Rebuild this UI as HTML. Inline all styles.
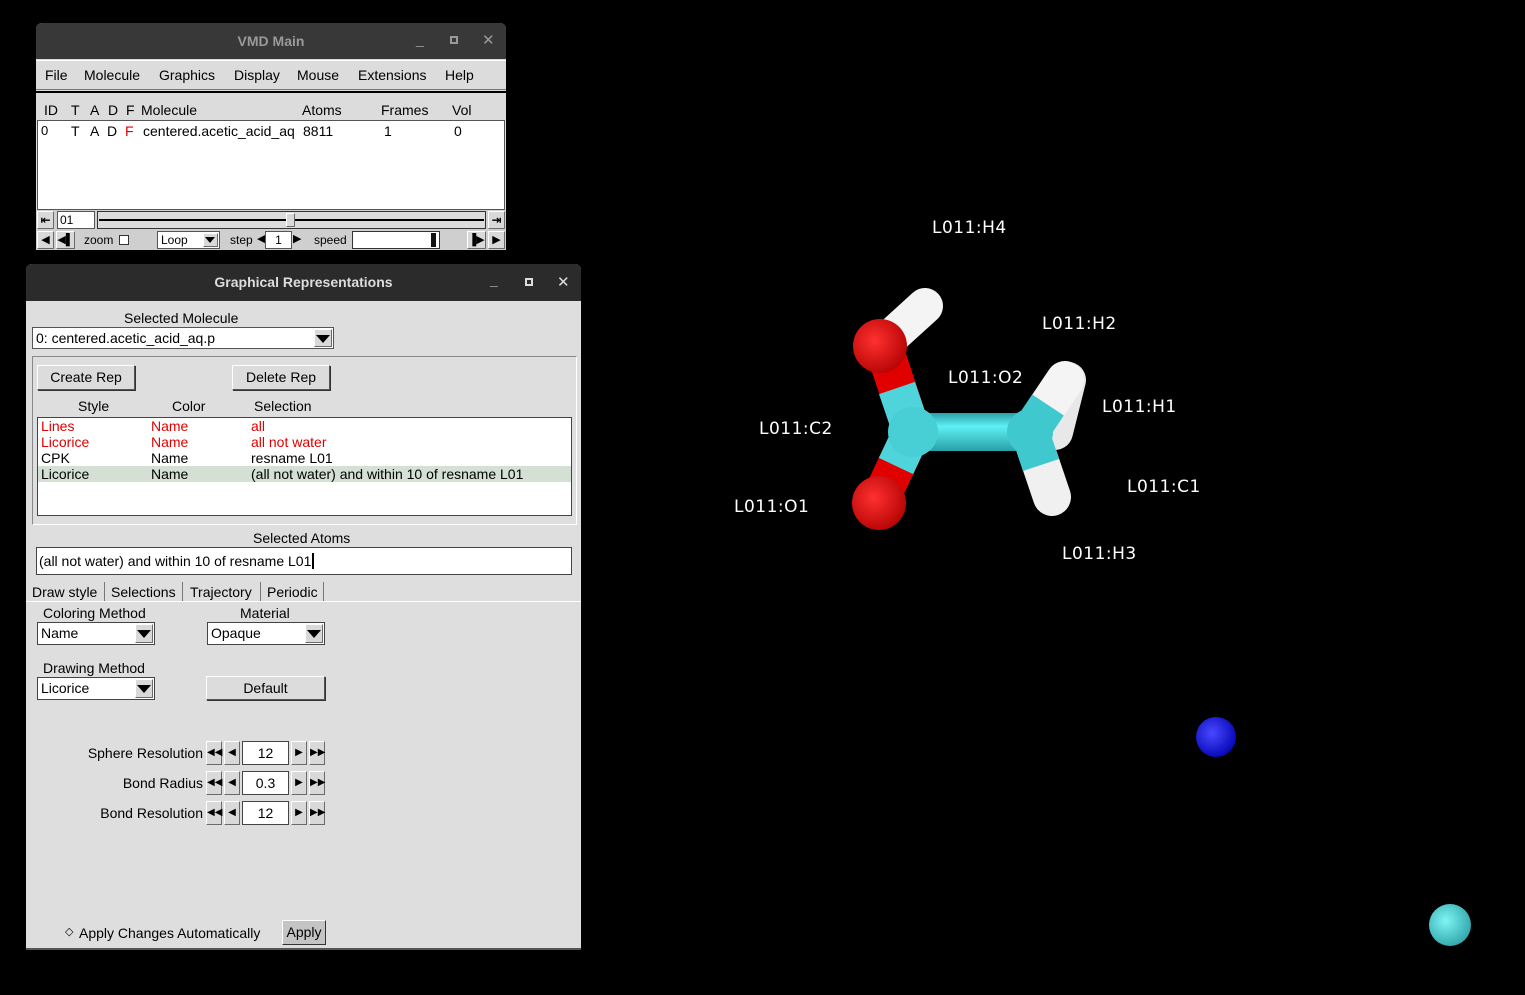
<!DOCTYPE html>
<html><head><meta charset="utf-8"><style>
*{box-sizing:border-box;margin:0;padding:0}
body{width:1525px;height:995px;background:#000;position:relative;overflow:hidden;font-family:"Liberation Sans","DejaVu Sans",sans-serif;font-size:14px;color:#000}
.a{position:absolute;white-space:nowrap}
.g{background:#dcdcdc}
.w{background:#fff}
.rais{border:1px solid;border-color:#fff #6a6a6a #6a6a6a #fff;background:#d9d9d9}
.btn{border:1px solid;border-color:#fff #555 #555 #fff;background:#dcdcdc;text-align:center;box-shadow:1px 1px 0 #333}
.arr{width:0;height:0;border-left:7px solid transparent;border-right:7px solid transparent;border-top:8px solid #000;position:absolute}
.red{color:#e00000}
.lbl{position:absolute;color:#fff;font-size:17px;letter-spacing:0.5px;font-family:"DejaVu Sans","Liberation Sans",sans-serif;white-space:nowrap}
</style></head><body>

<!-- VMD Main -->
<div class="a" style="left:36px;top:23px;width:470px;height:227px;background:#dcdcdc;border-radius:6px 6px 0 0;overflow:hidden">
  <div class="a" style="left:0;top:0;width:470px;height:36px;background:#383838"></div>
  <div class="a" style="left:0;top:10px;width:470px;text-align:center;color:#9a9a9a;font-weight:bold;font-size:14px">VMD Main</div>
  <div class="a" style="left:380px;top:8px;color:#999;font-size:14px">_</div>
  <div class="a" style="left:414px;top:13px;width:8px;height:8px;border:2px solid #999"></div>
  <div class="a" style="left:446px;top:8px;color:#999;font-size:15px;font-weight:bold">✕</div>
  <div class="a" style="left:0;top:37px;width:470px;height:30px;border-top:1px solid #fff;border-bottom:1px solid #777"></div>
  <div class="a" style="left:9px;top:44px;font-size:14px">File</div>
  <div class="a" style="left:48px;top:44px">Molecule</div>
  <div class="a" style="left:123px;top:44px">Graphics</div>
  <div class="a" style="left:198px;top:44px">Display</div>
  <div class="a" style="left:261px;top:44px">Mouse</div>
  <div class="a" style="left:322px;top:44px">Extensions</div>
  <div class="a" style="left:409px;top:44px">Help</div>
  <div class="a" style="left:0;top:68px;width:470px;height:2px;background:#000"></div>
  <div class="a" style="left:8px;top:79px">ID</div>
  <div class="a" style="left:35px;top:79px">T</div><div class="a" style="left:54px;top:79px">A</div><div class="a" style="left:72px;top:79px">D</div><div class="a" style="left:90px;top:79px">F</div>
  <div class="a" style="left:105px;top:79px">Molecule</div>
  <div class="a" style="left:266px;top:79px">Atoms</div>
  <div class="a" style="left:345px;top:79px">Frames</div>
  <div class="a" style="left:416px;top:79px">Vol</div>
  <div class="a w" style="left:1px;top:97px;width:468px;height:90px;border:1px solid #555"></div>
  <div class="a" style="left:5px;top:100px;font-size:13px">0</div>
  <div class="a" style="left:35px;top:100px">T</div><div class="a" style="left:54px;top:100px">A</div><div class="a" style="left:71px;top:100px">D</div><div class="a red" style="left:89px;top:100px">F</div>
  <div class="a" style="left:107px;top:100px;width:155px;overflow:hidden">centered.acetic_acid_aq</div>
  <div class="a" style="left:267px;top:100px">8811</div>
  <div class="a" style="left:348px;top:100px">1</div>
  <div class="a" style="left:418px;top:100px">0</div>
  <div class="a" style="left:0;top:187px;width:470px;height:40px;background:#cfcfcf"></div>
  <div class="a rais" style="left:1px;top:188px;width:17px;height:18px;font-size:12px;line-height:16px;text-align:center;font-weight:bold">⇤</div>
  <div class="a w" style="left:21px;top:188px;width:38px;height:18px;border:1px solid #555;font-size:12px;padding-left:2px;line-height:16px">01</div>
  <div class="a" style="left:61px;top:188px;width:389px;height:18px;border:1px solid #333;background:#dcdcdc"></div>
  <div class="a" style="left:63px;top:196px;width:385px;height:2px;background:#000"></div>
  <div class="a rais" style="left:250px;top:190px;width:9px;height:14px"></div>
  <div class="a rais" style="left:452px;top:188px;width:17px;height:18px;font-size:12px;line-height:16px;text-align:center;font-weight:bold">⇥</div>
  <div class="a rais" style="left:1px;top:208px;width:17px;height:18px;font-size:11px;line-height:16px;text-align:center">◀</div>
  <div class="a rais" style="left:20px;top:208px;width:19px;height:18px;font-size:11px;line-height:16px;text-align:center">◀▌</div>
  <div class="a" style="left:48px;top:210px;font-size:12px">zoom</div>
  <div class="a w" style="left:83px;top:212px;width:10px;height:10px;border:1px solid #333"></div>
  <div class="a w" style="left:121px;top:208px;width:63px;height:18px;border:1px solid #555;font-size:12px;padding-left:3px;line-height:16px">Loop</div>
  <div class="a rais" style="left:167px;top:210px;width:15px;height:14px"><div class="arr" style="left:1px;top:3px;border-width:6px 5px 0"></div></div>
  <div class="a" style="left:194px;top:210px;font-size:12px">step</div>
  <div class="a" style="left:221px;top:209px;font-size:11px">◀</div>
  <div class="a w" style="left:229px;top:208px;width:27px;height:18px;border:1px solid #555;font-size:12px;text-align:center;line-height:16px">1</div>
  <div class="a" style="left:257px;top:209px;font-size:11px">▶</div>
  <div class="a" style="left:278px;top:210px;font-size:12px">speed</div>
  <div class="a w" style="left:316px;top:208px;width:88px;height:18px;border:1px solid #333"></div>
  <div class="a" style="left:395px;top:210px;width:5px;height:14px;background:#111"></div>
  <div class="a rais" style="left:431px;top:208px;width:19px;height:18px;font-size:11px;line-height:16px;text-align:center">▐▶</div>
  <div class="a rais" style="left:452px;top:208px;width:17px;height:18px;font-size:11px;line-height:16px;text-align:center">▶</div>
</div>

<!-- Graphical Representations -->
<div class="a" style="left:26px;top:264px;width:555px;height:686px;background:#dedede;border-radius:6px 6px 0 0;overflow:hidden">
  <div class="a" style="left:0;top:0;width:555px;height:37px;background:#2b2b2b"></div>
  <div class="a" style="left:0;top:10px;width:555px;text-align:center;color:#ddd;font-weight:bold;font-size:14px">Graphical Representations</div>
  <div class="a" style="left:464px;top:8px;color:#ddd;font-size:14px;font-weight:bold">_</div>
  <div class="a" style="left:499px;top:14px;width:8px;height:8px;border:2px solid #ddd"></div>
  <div class="a" style="left:531px;top:9px;color:#ddd;font-size:15px;font-weight:bold">✕</div>

  <div class="a" style="left:98px;top:46px">Selected Molecule</div>
  <div class="a w" style="left:6px;top:63px;width:302px;height:22px;border:1px solid #555;padding-left:3px;line-height:20px">0: centered.acetic_acid_aq.p</div>
  <div class="a rais" style="left:288px;top:65px;width:18px;height:18px"><div class="arr" style="left:1px;top:5px"></div></div>

  <div class="a" style="left:6px;top:92px;width:545px;height:169px;border:1px solid;border-color:#888 #fff #fff #888"></div>
  <div class="a btn" style="left:11px;top:101px;width:98px;height:25px;line-height:23px">Create Rep</div>
  <div class="a btn" style="left:206px;top:101px;width:98px;height:25px;line-height:23px">Delete Rep</div>
  <div class="a" style="left:52px;top:134px">Style</div>
  <div class="a" style="left:146px;top:134px">Color</div>
  <div class="a" style="left:228px;top:134px">Selection</div>
  <div class="a w" style="left:11px;top:153px;width:535px;height:99px;border:1px solid #444"></div>
  <div class="a" style="left:12px;top:202px;width:533px;height:16px;background:#d3e0d3"></div>
  <div class="a red" style="left:15px;top:154px">Lines</div><div class="a red" style="left:125px;top:154px">Name</div><div class="a red" style="left:225px;top:154px">all</div>
  <div class="a red" style="left:15px;top:170px">Licorice</div><div class="a red" style="left:125px;top:170px">Name</div><div class="a red" style="left:225px;top:170px">all not water</div>
  <div class="a" style="left:15px;top:186px">CPK</div><div class="a" style="left:125px;top:186px">Name</div><div class="a" style="left:225px;top:186px">resname L01</div>
  <div class="a" style="left:15px;top:202px">Licorice</div><div class="a" style="left:125px;top:202px">Name</div><div class="a" style="left:225px;top:202px">(all not water) and within 10 of resname L01</div>

  <div class="a" style="left:227px;top:266px">Selected Atoms</div>
  <div class="a w" style="left:10px;top:283px;width:536px;height:28px;border:1px solid #444;padding-left:2px;line-height:26px">(all not water) and within 10 of resname L01<span style="border-left:2px solid #000;margin-left:1px"></span></div>

  <div class="a" style="left:0;top:337px;width:555px;height:1px;background:#fff"></div>
  <div class="a" style="left:6px;top:320px">Draw style</div>
  <div class="a" style="left:78px;top:318px;width:1px;height:19px;background:#777"></div>
  <div class="a" style="left:85px;top:320px">Selections</div>
  <div class="a" style="left:156px;top:318px;width:1px;height:19px;background:#777"></div>
  <div class="a" style="left:164px;top:320px">Trajectory</div>
  <div class="a" style="left:234px;top:318px;width:1px;height:19px;background:#777"></div>
  <div class="a" style="left:241px;top:320px">Periodic</div>
  <div class="a" style="left:297px;top:318px;width:1px;height:19px;background:#777"></div>

  <div class="a" style="left:17px;top:341px">Coloring Method</div>
  <div class="a w" style="left:11px;top:358px;width:118px;height:23px;border:1px solid #444;padding-left:3px;line-height:21px">Name</div>
  <div class="a rais" style="left:109px;top:360px;width:18px;height:19px"><div class="arr" style="left:1px;top:5px"></div></div>
  <div class="a" style="left:214px;top:341px">Material</div>
  <div class="a w" style="left:181px;top:358px;width:118px;height:23px;border:1px solid #444;padding-left:3px;line-height:21px">Opaque</div>
  <div class="a rais" style="left:279px;top:360px;width:18px;height:19px"><div class="arr" style="left:1px;top:5px"></div></div>

  <div class="a" style="left:17px;top:396px">Drawing Method</div>
  <div class="a w" style="left:11px;top:413px;width:118px;height:23px;border:1px solid #444;padding-left:3px;line-height:21px">Licorice</div>
  <div class="a rais" style="left:109px;top:415px;width:18px;height:19px"><div class="arr" style="left:1px;top:5px"></div></div>
  <div class="a btn" style="left:180px;top:412px;width:119px;height:24px;line-height:22px">Default</div>

  <div class="a" style="left:0;top:481px;width:177px;text-align:right">Sphere Resolution</div>
  <div class="a" style="left:0;top:511px;width:177px;text-align:right">Bond Radius</div>
  <div class="a" style="left:0;top:541px;width:177px;text-align:right">Bond Resolution</div>
  <div class="a" style="left:180px;top:477px;width:120px;height:90px">
    <div class="a rais" style="left:0;top:0;width:16px;height:24px;font-size:10px;line-height:22px;text-align:center">◀◀</div>
    <div class="a rais" style="left:18px;top:0;width:16px;height:24px;font-size:10px;line-height:22px;text-align:center">◀</div>
    <div class="a w" style="left:36px;top:0;width:47px;height:24px;border:1px solid #444;text-align:center;line-height:22px">12</div>
    <div class="a rais" style="left:85px;top:0;width:16px;height:24px;font-size:10px;line-height:22px;text-align:center">▶</div>
    <div class="a rais" style="left:103px;top:0;width:16px;height:24px;font-size:10px;line-height:22px;text-align:center">▶▶</div>
    <div class="a rais" style="left:0;top:30px;width:16px;height:24px;font-size:10px;line-height:22px;text-align:center">◀◀</div>
    <div class="a rais" style="left:18px;top:30px;width:16px;height:24px;font-size:10px;line-height:22px;text-align:center">◀</div>
    <div class="a w" style="left:36px;top:30px;width:47px;height:24px;border:1px solid #444;text-align:center;line-height:22px">0.3</div>
    <div class="a rais" style="left:85px;top:30px;width:16px;height:24px;font-size:10px;line-height:22px;text-align:center">▶</div>
    <div class="a rais" style="left:103px;top:30px;width:16px;height:24px;font-size:10px;line-height:22px;text-align:center">▶▶</div>
    <div class="a rais" style="left:0;top:60px;width:16px;height:24px;font-size:10px;line-height:22px;text-align:center">◀◀</div>
    <div class="a rais" style="left:18px;top:60px;width:16px;height:24px;font-size:10px;line-height:22px;text-align:center">◀</div>
    <div class="a w" style="left:36px;top:60px;width:47px;height:24px;border:1px solid #444;text-align:center;line-height:22px">12</div>
    <div class="a rais" style="left:85px;top:60px;width:16px;height:24px;font-size:10px;line-height:22px;text-align:center">▶</div>
    <div class="a rais" style="left:103px;top:60px;width:16px;height:24px;font-size:10px;line-height:22px;text-align:center">▶▶</div>
  </div>

  <div class="a" style="left:39px;top:661px;font-size:11px">◇</div>
  <div class="a" style="left:53px;top:661px">Apply Changes Automatically</div>
  <div class="a" style="left:256px;top:656px;width:44px;height:25px;background:#c4c4c4;border:1px solid;border-color:#fff #333 #333 #fff;text-align:center;line-height:23px">Apply</div>
  <div class="a" style="left:0;top:684px;width:555px;height:2px;background:#555"></div>
</div>

<!-- Molecule -->
<svg class="a" style="left:0;top:0" width="1525" height="995">
<defs>
<linearGradient id="cy" x1="0" y1="0" x2="0" y2="1"><stop offset="0" stop-color="#2aa0a8"/><stop offset=".35" stop-color="#5ff0f5"/><stop offset="1" stop-color="#28a0a8"/></linearGradient>
<radialGradient id="rs" cx=".4" cy=".4" r=".7"><stop offset="0" stop-color="#ff3030"/><stop offset="1" stop-color="#b00000"/></radialGradient>
<radialGradient id="bs" cx=".4" cy=".4" r=".7"><stop offset="0" stop-color="#4848ff"/><stop offset="1" stop-color="#0000b0"/></radialGradient>
<radialGradient id="cs" cx=".4" cy=".4" r=".7"><stop offset="0" stop-color="#7ff5f5"/><stop offset="1" stop-color="#2a9fa5"/></radialGradient>
</defs>
<g stroke-linecap="round" fill="none">
<line x1="1055" y1="432" x2="1068" y2="380" stroke="#e8e8e8" stroke-width="36"/>
<line x1="1030" y1="432" x2="1065" y2="380" stroke="#f4f4f4" stroke-width="38"/>
<line x1="1030" y1="432" x2="1052" y2="497" stroke="#f0f0f0" stroke-width="38"/>
<line x1="882" y1="345" x2="925" y2="306" stroke="#f4f4f4" stroke-width="36"/>
<line x1="912" y1="432" x2="882" y2="342" stroke="#e00000" stroke-width="38" stroke-linecap="butt"/>
<line x1="912" y1="432" x2="880" y2="500" stroke="#e00000" stroke-width="38" stroke-linecap="butt"/>
<line x1="912" y1="432" x2="897" y2="388" stroke="#4ed4da" stroke-width="38" stroke-linecap="butt"/>
<line x1="912" y1="432" x2="896" y2="466" stroke="#4ed4da" stroke-width="38" stroke-linecap="butt"/>
<line x1="1030" y1="432" x2="1048" y2="405" stroke="#40c8cf" stroke-width="38" stroke-linecap="butt"/>
<line x1="1030" y1="432" x2="1041" y2="465" stroke="#40c8cf" stroke-width="38" stroke-linecap="butt"/>
</g>
<rect x="915" y="413" width="115" height="38" fill="url(#cy)"/>
<circle cx="880" cy="346" r="27" fill="url(#rs)"/>
<circle cx="879" cy="503" r="27" fill="url(#rs)"/>
<circle cx="913" cy="432" r="25" fill="#48cfd6"/>
<circle cx="1030" cy="432" r="23" fill="#40c8cf"/>
<circle cx="1216" cy="737" r="20" fill="url(#bs)"/>
<circle cx="1450" cy="925" r="21" fill="url(#cs)"/>
</svg>
<div class="lbl" style="left:932px;top:218px">L011:H4</div>
<div class="lbl" style="left:1042px;top:314px">L011:H2</div>
<div class="lbl" style="left:948px;top:368px">L011:O2</div>
<div class="lbl" style="left:1102px;top:397px">L011:H1</div>
<div class="lbl" style="left:759px;top:419px">L011:C2</div>
<div class="lbl" style="left:1127px;top:477px">L011:C1</div>
<div class="lbl" style="left:734px;top:497px">L011:O1</div>
<div class="lbl" style="left:1062px;top:544px">L011:H3</div>
</body></html>
